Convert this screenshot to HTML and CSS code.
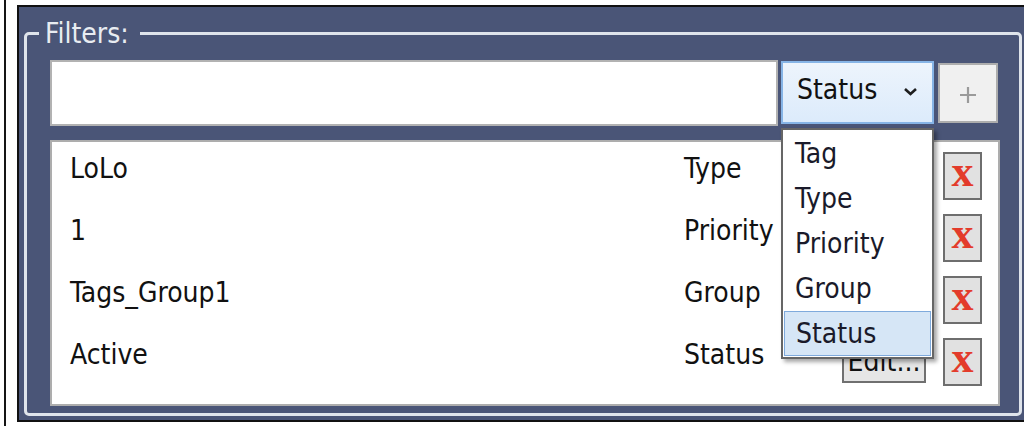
FILE: index.html
```html
<!DOCTYPE html>
<html>
<head>
<meta charset="utf-8">
<link rel="stylesheet" href="styles.css">
</head>
<body>
<div class="page">
  <div class="vline"></div>
  <div class="panel">
    <fieldset class="group">
      <legend class="legend">Filters:</legend>
      <div class="content">
        <div class="toprow">
          <div class="input"></div>
          <div class="combo">
            <span class="combo-text">Status</span>
            <svg class="chev" width="15" height="9" viewBox="0 0 15 9"><polyline points="2,2 7.5,7 13,2" fill="none" stroke="#1e1e1e" stroke-width="2.6"/></svg>
            <div class="dropdown">
              <div class="item">Tag</div>
              <div class="item">Type</div>
              <div class="item">Priority</div>
              <div class="item">Group</div>
              <div class="item selected">Status</div>
            </div>
          </div>
          <div class="plus">
            <svg width="20" height="20" viewBox="0 0 20 20"><path d="M10 2V18M2 10H18" stroke="#9a9a9a" stroke-width="2.2"/></svg>
          </div>
        </div>
        <div class="listbox">
          <div class="row">
            <span class="cell">LoLo</span>
            <span class="cell">Type</span>
            <span class="edit">Edit...</span>
            <span class="del">x</span>
          </div>
          <div class="row">
            <span class="cell">1</span>
            <span class="cell">Priority</span>
            <span class="edit">Edit...</span>
            <span class="del">x</span>
          </div>
          <div class="row">
            <span class="cell">Tags_Group1</span>
            <span class="cell">Group</span>
            <span class="edit">Edit...</span>
            <span class="del">x</span>
          </div>
          <div class="row">
            <span class="cell">Active</span>
            <span class="cell">Status</span>
            <span class="edit">Edit...</span>
            <span class="del">x</span>
          </div>
        </div>
      </div>
    </fieldset>
  </div>
</div>
</body>
</html>
```
FILE: styles.css
```css
html, body {
  margin: 0;
  padding: 0;
  background: #ffffff;
  overflow: hidden;
}
body {
  width: 1024px;
  height: 426px;
  font-family: "DejaVu Sans Condensed", "DejaVu Sans", sans-serif;
  font-stretch: condensed;
  font-size: 28px;
  color: #111111;
}
.page {
  display: flex;
  height: 426px;
}
.vline {
  width: 2px;
  margin-left: 4px;
  background: #151515;
  flex: none;
}
.panel {
  flex: 1;
  margin-left: 11px;
  margin-top: 5px;
  height: 417px;
  box-sizing: border-box;
  background: #4a5577;
  border: 2px solid #111111;
  border-right: none;
  display: flex;
  flex-direction: column;
}
.group {
  margin: 11px 2px 0 5px;
  padding: 11px 19px 7px 12px;
  border: 3px solid #dfe4eb;
  border-radius: 5px;
  min-width: 0;
}
.legend {
  padding: 0 11px 0 6px;
  color: #e8ecf1;
  font-size: 28px;
  line-height: 31px;
}
.content {
  margin-left: 11px;
}
.toprow {
  display: flex;
  align-items: flex-start;
  height: 66px;
}
.input {
  width: 728px;
  height: 66px;
  box-sizing: border-box;
  background: #ffffff;
  border: 2px solid #b2b2b2;
}
.combo {
  position: relative;
  width: 153px;
  height: 63px;
  margin-top: 1px;
  margin-left: 3px;
  box-sizing: border-box;
  border: 2px solid #86b4e6;
  background: linear-gradient(#edf4fc, #dcebfb);
  display: flex;
  align-items: center;
  padding-left: 14px;
}
.combo-text {
  flex: 1;
  line-height: 32px;
  padding-bottom: 6px;
}
.chev {
  margin-right: 14px;
  margin-bottom: 2px;
}
.dropdown {
  position: absolute;
  left: -2px;
  top: calc(100% + 6px);
  width: 153px;
  box-sizing: border-box;
  background: #ffffff;
  border: 2px solid #666666;
  box-shadow: 3px 3px 4px rgba(0, 0, 0, 0.35);
  padding: 1px 0;
  z-index: 5;
}
.item {
  height: 45px;
  box-sizing: border-box;
  padding-left: 12px;
  display: flex;
  align-items: center;
  color: #1a1a2a;
}
.item.selected {
  background: #d6e6f6;
  border: 1px solid #7faadc;
  margin: 0 1px;
  padding-left: 11px;
}
.plus {
  width: 60px;
  height: 60px;
  margin-top: 3px;
  margin-left: 4px;
  box-sizing: border-box;
  background: #f0f0f0;
  border: 2px solid #adadad;
  display: flex;
  align-items: center;
  justify-content: center;
}
.plus svg {
  margin-top: 4px;
}
.listbox {
  margin-top: 14px;
  width: 950px;
  height: 266px;
  box-sizing: border-box;
  background: #ffffff;
  border: 2px solid #adadad;
  padding-top: 3px;
}
.row {
  display: grid;
  grid-template-columns: 614px 158px 84px 39px;
  align-items: center;
  height: 62px;
  padding-left: 18px;
}
.cell {
  line-height: 32px;
  padding-bottom: 14px;
  white-space: nowrap;
}
.edit {
  height: 42px;
  box-sizing: border-box;
  background: #e6e6e6;
  border: 2px solid #707070;
  display: flex;
  align-items: center;
  justify-content: center;
  line-height: 30px;
}
.del {
  margin-left: 17px;
  width: 39px;
  height: 48px;
  box-sizing: border-box;
  background: #e1e1e1;
  border: 2px solid #6e6e6e;
  color: #e33b2b;
  font-family: "Liberation Serif", serif;
  font-weight: bold;
  font-size: 44px;
  line-height: 30px;
  display: flex;
  align-items: center;
  justify-content: center;
  padding-bottom: 8px;
}
```
